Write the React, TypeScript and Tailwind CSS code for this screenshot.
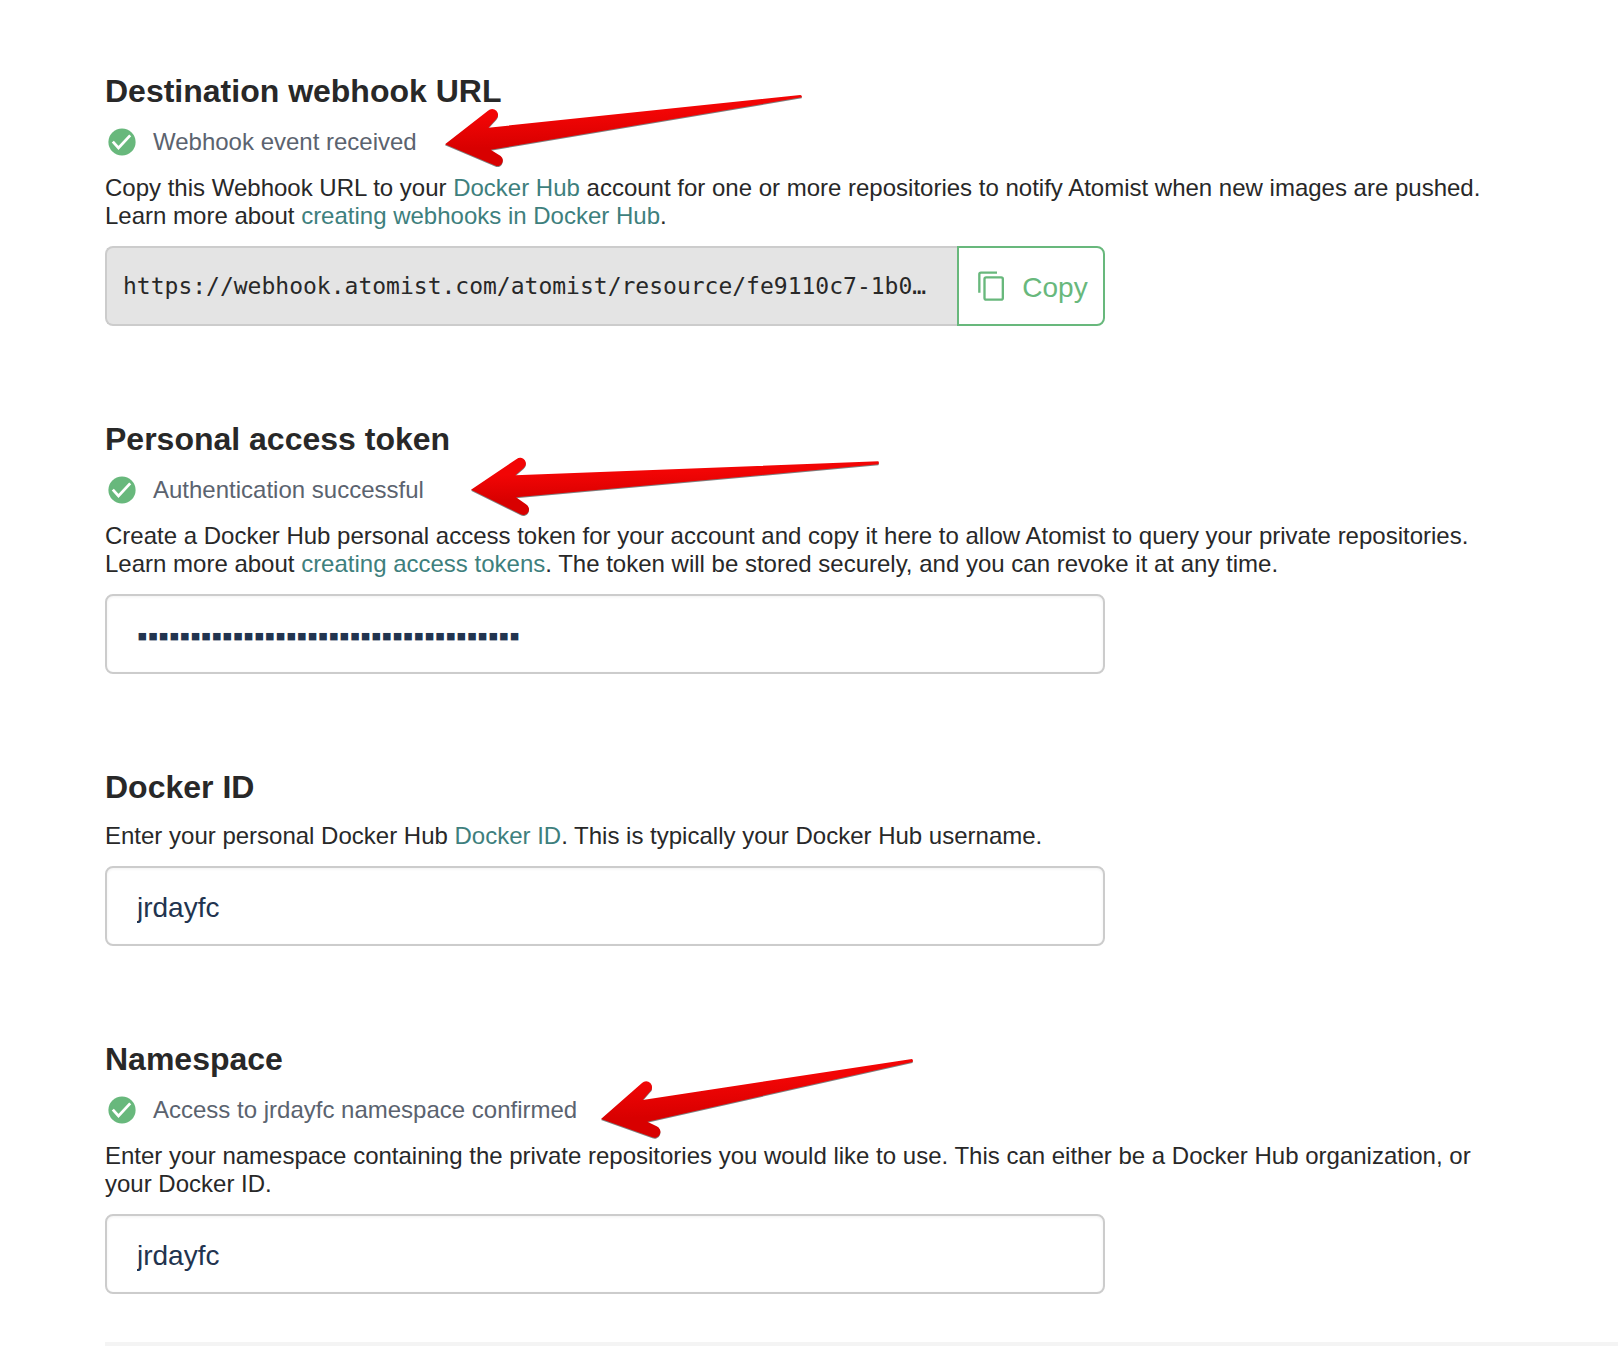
import { useState, type ReactNode } from "react";

const MASKED_TOKEN = "▪".repeat(36);

function Section({ id, title, children }: { id: string; title: string; children: ReactNode }) {
  return (
    <section className="flex flex-col">
      <h2 className="mb-[15px] text-[32px] leading-10 font-bold">
        <label htmlFor={id}>{title}</label>
      </h2>
      {children}
    </section>
  );
}

function Status({ text, children }: { text: string; children: ReactNode }) {
  return (
    <div className="relative mb-4 flex h-8 items-center gap-[14px] text-2xl leading-7 text-[#5b636f]">
      <svg className="h-8 w-[34px] shrink-0" viewBox="0 0 34 32" fill="none" aria-hidden="true">
        <circle cx="17" cy="16" r="13.6" fill="#68b87c" />
        <path d="M7.8 15.6 13.5 22 25.2 9.4" stroke="#fff" strokeWidth="2.8" />
      </svg>
      <span>{text}</span>
      {children}
    </div>
  );
}

function Arrow({ id, d, viewBox, className }: { id: string; d: string; viewBox: string; className: string }) {
  return (
    <svg className={`pointer-events-none absolute max-w-none ${className}`} viewBox={viewBox} aria-hidden="true">
      <defs>
        <linearGradient id={id} x1="0" y1="0" x2="0.12" y2="1">
          <stop offset="0.3" stopColor="#f20505" />
          <stop offset="0.75" stopColor="#d80000" />
        </linearGradient>
      </defs>
      <path d={d} transform="translate(0 3)" fill="#000" opacity="0.5" />
      <path d={d} fill={`url(#${id})`} />
    </svg>
  );
}

function Note({ children }: { children: ReactNode }) {
  return <p className="mb-4 text-2xl leading-7">{children}</p>;
}

function Link({ children }: { children: ReactNode }) {
  return (
    <a href="#" className="text-[#3e7f7d]">
      {children}
    </a>
  );
}

const FIELD =
  "h-20 w-full max-w-[1000px] rounded-lg border-2 border-[#ccc] bg-white px-[30px] text-[#22344f] shadow-[inset_0_1px_3px_rgba(0,0,0,0.06)] outline-none";

export default function App() {
  const [token, setToken] = useState(MASKED_TOKEN);
  const [dockerId, setDockerId] = useState("jrdayfc");
  const [namespace, setNamespace] = useState("jrdayfc");

  return (
    <main className="min-h-screen bg-white pt-[71px] pl-[105px] font-['Liberation_Sans',Arial,sans-serif] text-[#282828]">
      <form className="flex flex-col gap-[93px] pr-24" onSubmit={(e) => e.preventDefault()}>
        <Section id="webhook" title="Destination webhook URL">
          <Status text="Webhook event received">
            <Arrow
              id="arrow-webhook"
              className="-top-[46px] left-[325px] h-[100px] w-[400px]"
              viewBox="0 0 1200 300"
              d="M45 193 L174 92 A17 17 0 0 1 199 117 L175 143 L1111 45 Q1117 46 1115 52 L182 209 L212 228 A17 17 0 0 1 199 258 Z"
            />
          </Status>
          <Note>
            Copy this Webhook URL to your <Link>Docker Hub</Link> account for one or more repositories to notify
            Atomist when new images are pushed. Learn more about <Link>creating webhooks in Docker Hub</Link>.
          </Note>
          <div className="flex h-20 w-full max-w-[1000px]">
            <input
              id="webhook"
              readOnly
              value="https://webhook.atomist.com/atomist/resource/fe9110c7-1b0…"
              className="min-w-0 flex-1 rounded-l-lg border-2 border-r-0 border-[#ccc] bg-[#e4e4e4] px-4 font-['DejaVu_Sans_Mono',monospace] text-[23px] outline-none"
            />
            <button
              type="button"
              className="flex w-[148px] shrink-0 items-center justify-center gap-[18px] rounded-r-lg border-2 border-[#68b87c] bg-white pl-1 text-[28px] text-[#68b87c]"
            >
              <svg className="h-[30px] w-[26px]" viewBox="0 0 78 90" fill="none" stroke="currentColor" strokeWidth="7" aria-hidden="true">
                <path d="M57 5H9Q4 5 4 10V65" />
                <rect x="19.5" y="19" width="55" height="67" rx="5" />
              </svg>
              <span className="pt-1">Copy</span>
            </button>
          </div>
        </Section>

        <Section id="token" title="Personal access token">
          <Status text="Authentication successful">
            <Arrow
              id="arrow-token"
              className="-top-[34px] left-[345px] h-[90px] w-[450px]"
              viewBox="0 0 1350 270"
              d="M63 149 L200 57 A17 17 0 0 1 221 84 L196 106 L1285 64 Q1288 68 1285 73 L198 172 L228 193 A17 17 0 0 1 212 223 Z"
            />
          </Status>
          <Note>
            Create a Docker Hub personal access token for your account and copy it here to allow Atomist to query
            your private repositories. Learn more about <Link>creating access tokens</Link>. The token will be
            stored securely, and you can revoke it at any time.
          </Note>
          <input
            id="token"
            autoComplete="off"
            value={token}
            onChange={(e) => setToken(e.target.value)}
            className={`${FIELD} pt-1 text-3xl`}
          />
        </Section>

        <Section id="docker-id" title="Docker ID">
          <Note>
            Enter your personal Docker Hub <Link>Docker ID</Link>. This is typically your Docker Hub username.
          </Note>
          <input
            id="docker-id"
            value={dockerId}
            onChange={(e) => setDockerId(e.target.value)}
            className={`${FIELD} pt-1 text-[28px]`}
          />
        </Section>

        <Section id="namespace" title="Namespace">
          <Status text="Access to jrdayfc namespace confirmed">
            <Arrow
              id="arrow-namespace"
              className="-top-[54px] left-[485px] h-[110px] w-[340px]"
              viewBox="0 0 1020 330"
              d="M33 237 L156 129 A17 17 0 0 1 181 154 L158 180 L966 57 Q971 60 967 66 L172 245 L200 259 A17 17 0 0 1 187 292 Z"
            />
          </Status>
          <Note>
            Enter your namespace containing the private repositories you would like to use. This can either be a
            Docker Hub organization, or your Docker ID.
          </Note>
          <input
            id="namespace"
            value={namespace}
            onChange={(e) => setNamespace(e.target.value)}
            className={`${FIELD} pt-1 text-[28px]`}
          />
        </Section>
      </form>
      <hr className="mt-12 h-1 border-0 bg-[#f4f4f4]" />
    </main>
  );
}
